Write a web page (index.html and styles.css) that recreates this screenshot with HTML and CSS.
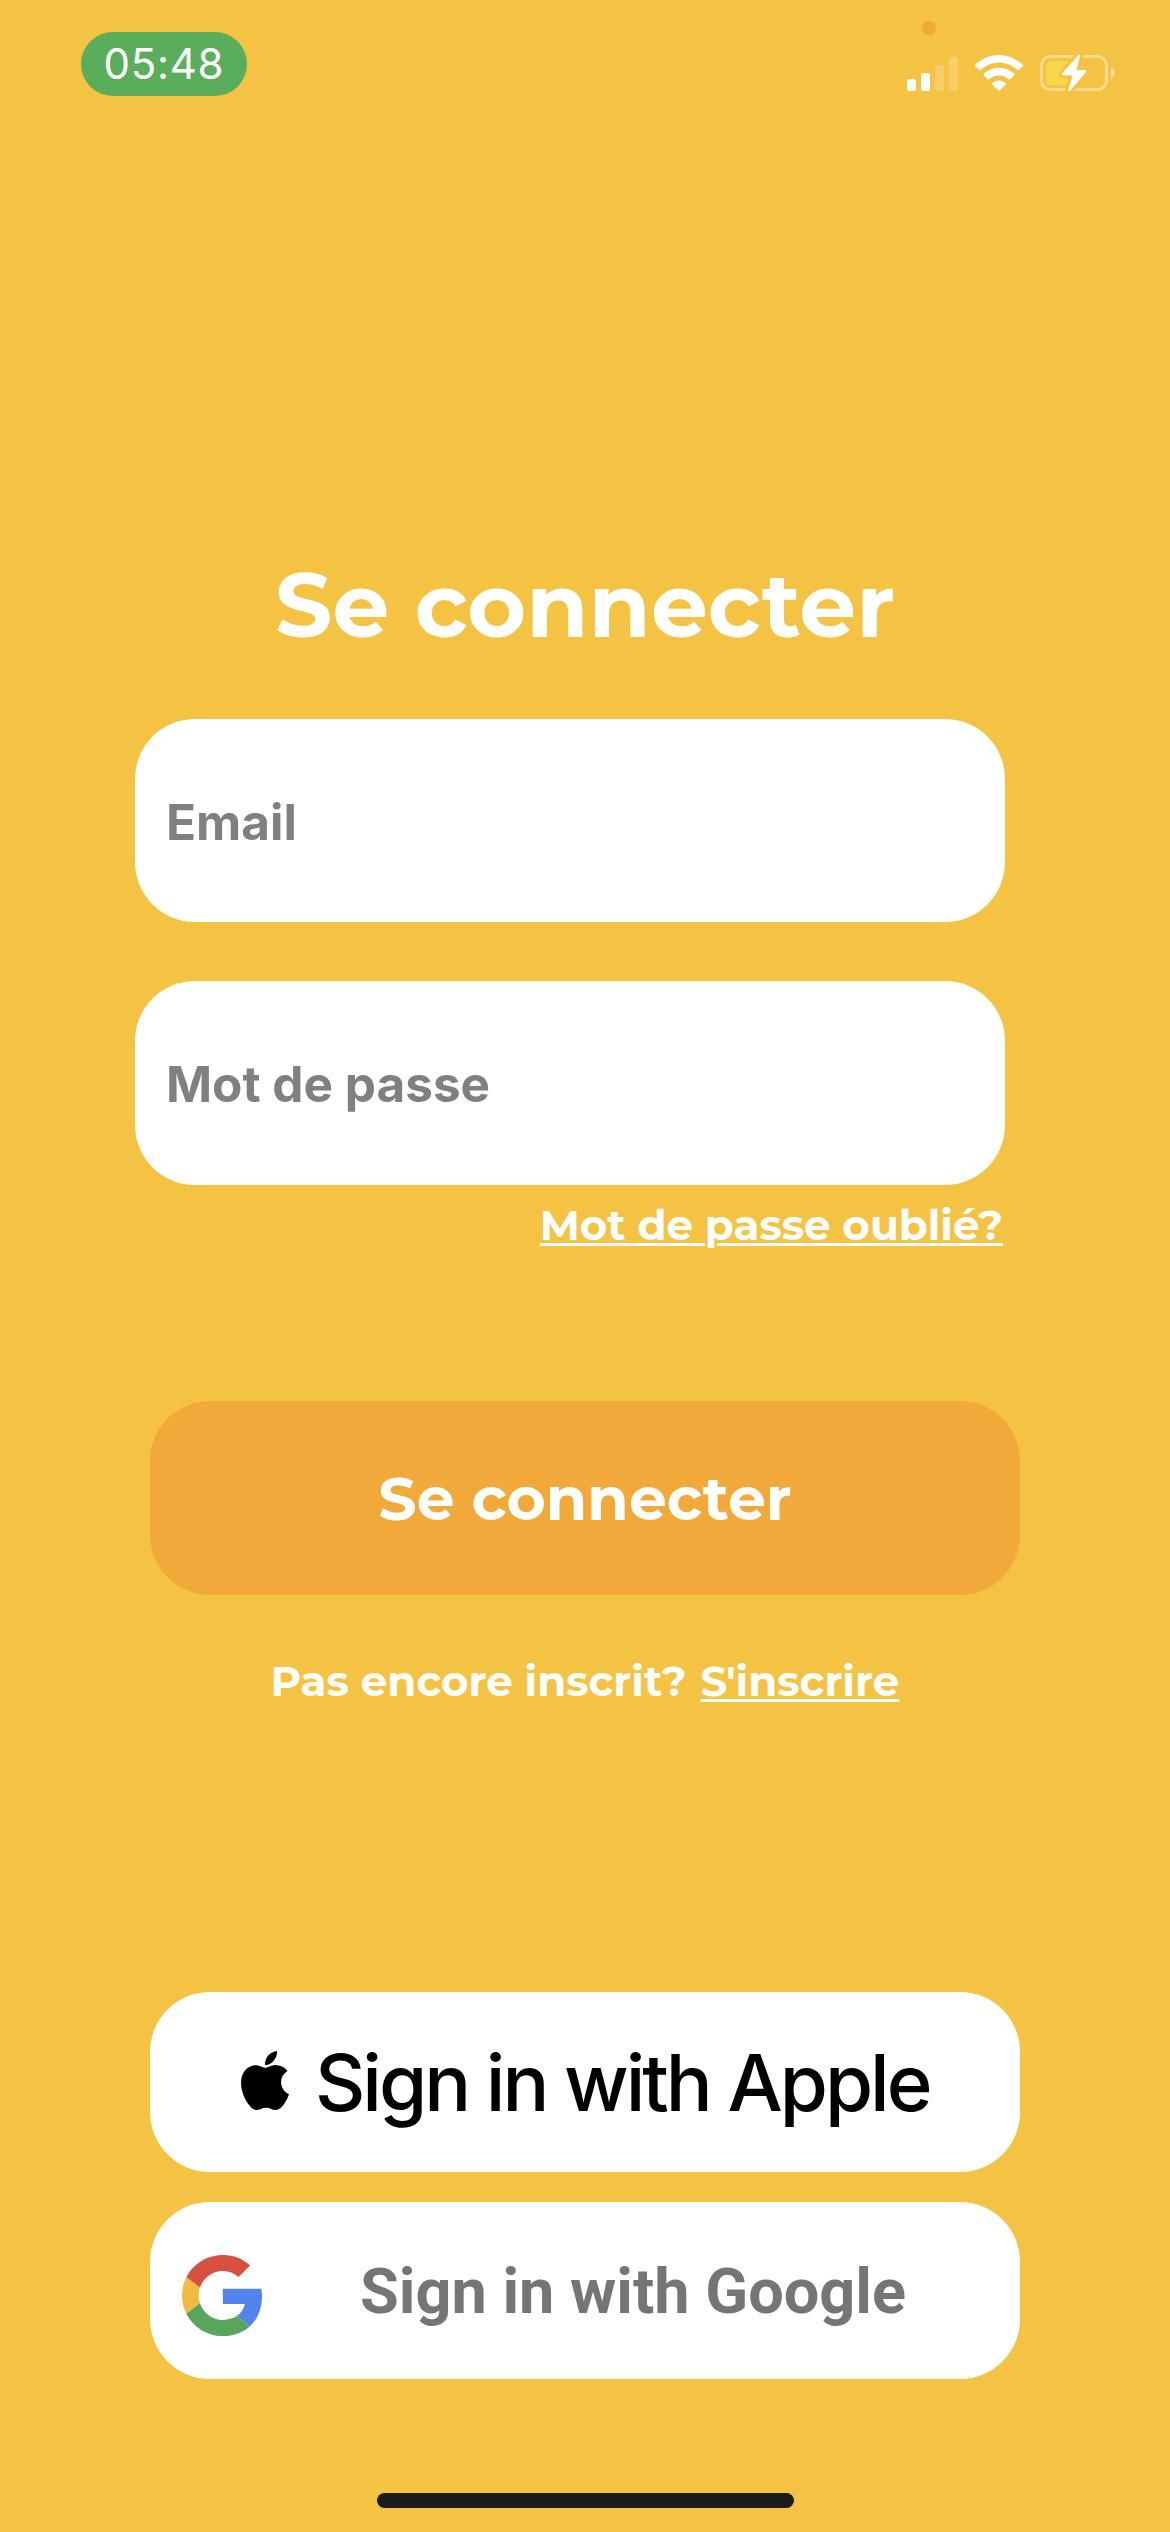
FILE: index.html
```html
<!DOCTYPE html>
<html lang="fr">
<head>
<meta charset="utf-8">
<title>Se connecter</title>
<link rel="stylesheet" href="styles.css">
</head>
<body>
<div class="screen">
  <header class="status">
    <div class="time">05:48</div>
    <div class="indicators">
      <span class="mic-dot"></span>
      <svg class="signal" width="51" height="34" viewBox="0 0 51 34" fill="#fff">
        <rect x="0" y="22" width="9" height="12" rx="2.5"/>
        <rect x="14" y="16" width="9" height="18" rx="2.5"/>
        <rect x="28" y="8" width="9" height="26" rx="2.5" opacity=".2"/>
        <rect x="42" y="0" width="9" height="34" rx="2.5" opacity=".2"/>
      </svg>
      <svg class="wifi" width="48" height="36" viewBox="0 0 48 36" fill="#fff">
        <path d="M24 0C33 0 41 3.500 47.600 9.600Q48.400 10.400 47.600 11.200L44 15Q43.200 15.800 42.400 15C37.200 10.200 31 7.700 24 7.700S10.800 10.200 5.600 15Q4.800 15.800 4 15L.4 11.200Q-.4 10.400 .4 9.600C7 3.500 15 0 24 0Z"/>
        <path d="M24 12.800C29.800 12.800 35 15 39.200 18.700Q40 19.500 39.200 20.300L35.300 24.200Q34.500 25 33.700 24.300C31 21.900 27.700 20.500 24 20.500S17 21.900 14.300 24.300Q13.500 25 12.700 24.200L8.800 20.300Q8 19.500 8.800 18.700C13 15 18.200 12.800 24 12.800Z"/>
        <path d="M24 25.600C26.600 25.600 28.900 26.500 30.800 28Q31.600 28.700 30.800 29.500L24.800 35.500Q24 36.200 23.200 35.500L17.200 29.500Q16.400 28.700 17.200 28C19.100 26.500 21.400 25.600 24 25.600Z"/>
      </svg>
      <svg class="battery" width="76" height="38" viewBox="0 0 76 38">
        <rect x="1.500" y="2.500" width="65" height="33" rx="9" fill="none" stroke="#fff" stroke-opacity=".4" stroke-width="3"/>
        <path d="M71 13.500C76.300 15.500 76.300 22.500 71 24.500Z" fill="#fff" opacity=".45"/>
        <rect x="6" y="7" width="29" height="24" rx="4.500" fill="#f8d649"/>
        <path d="M38.500 .8Q40.800 -.8 40.300 2L36.500 16H45Q47 16.500 45.600 18.500L30.500 36.500Q28 38.500 28.500 35.300L32.500 21.500H23.500Q21 21 22.500 19Z" fill="#f4c344" stroke="#f4c344" stroke-width="6"/>
        <path d="M38 1.500Q40.500 -.5 40 2.500L36.500 16H45Q47 16.300 45.500 18.500L30.500 36.500Q28 38.500 28.500 35.300L32.500 21.500H23Q20.800 21 22.500 19Z" fill="#fff"/>
      </svg>
    </div>
  </header>

  <main class="content">
    <h1 class="title">Se connecter</h1>
    <form class="form">
      <div class="field">Email</div>
      <div class="field">Mot de passe</div>
      <a class="link forgot">Mot de passe oublié?</a>
    </form>
    <div class="button submit">Se connecter</div>
    <p class="signup"><span>Pas encore inscrit?</span><a class="link">S'inscrire</a></p>
    <div class="button apple">
      <svg class="apple-logo" width="48" height="59" viewBox="4 32 376.500 448" preserveAspectRatio="none">
        <path d="M318.700 268.700c-.2-36.700 16.400-64.400 50-84.800-18.800-26.900-47.200-41.700-84.700-44.600-35.500-2.800-74.300 20.700-88.500 20.700-15 0-49.400-19.700-76.400-19.700C63.300 141.200 4 184.800 4 273.500q0 39.300 14.400 81.200c12.800 36.700 59 126.700 107.200 125.200 25.200-.6 43-17.900 75.800-17.900 31.800 0 48.300 17.900 76.400 17.900 48.600-.7 90.400-82.500 102.600-119.300-65.200-30.700-61.700-90-61.700-91.900zM262.100 104.500c27.300-32.400 24.800-61.900 24-72.500-24.100 1.400-52 16.400-67.900 34.900-17.500 19.800-27.800 44.300-25.600 71.900 26.100 2 49.900-11.400 69.500-34.300z"/>
      </svg>
      <span>Sign in with Apple</span>
    </div>
    <div class="button google">
      <svg class="google-logo" width="80" height="81" viewBox="0 0 47 48" preserveAspectRatio="none">
        <path fill="#d85040" d="M24 9.500c3.540 0 6.710 1.220 9.210 3.600l6.850-6.850C35.900 2.380 30.470 0 24 0 14.620 0 6.510 5.380 2.560 13.220l7.980 6.190C12.430 13.720 17.740 9.500 24 9.500z"/>
        <path fill="#5383ec" d="M46.980 24.550c0-1.570-.15-3.090-.38-4.550H24v9.020h12.940c-.58 2.960-2.260 5.480-4.780 7.180l7.730 6c4.510-4.180 7.090-10.360 7.090-17.650z"/>
        <path fill="#f0bb40" d="M10.530 28.590c-.48-1.450-.76-2.990-.76-4.590s.27-3.140.76-4.590l-7.980-6.190C.92 16.460 0 20.120 0 24s.92 7.540 2.560 10.780l7.970-6.190z"/>
        <path fill="#58a55c" d="M24 48c6.480 0 11.930-2.130 15.890-5.810l-7.730-6c-2.150 1.450-4.920 2.300-8.160 2.300-6.260 0-11.570-4.220-13.470-9.910l-7.980 6.190C6.510 42.620 14.620 48 24 48z"/>
      </svg>
      <span>Sign in with Google</span>
    </div>
  </main>
  <div class="home-bar"></div>
</div>
</body>
</html>
```
FILE: styles.css
```css
* { box-sizing: border-box; margin: 0; }

body { background: #f4c344; }

.screen {
  width: 1170px;
  height: 2532px;
  display: flex;
  flex-direction: column;
  overflow: hidden;
  font-family: Montserrat, Inter, sans-serif;
  font-weight: 700;
  color: #fff;
}

.status {
  height: 550px;
  padding: 32px 54px 0 80.5px;
  display: flex;
  justify-content: space-between;
  align-items: flex-start;
}

.time {
  width: 166px;
  height: 64px;
  border-radius: 32px;
  background: #5aae5b;
  font: 400 42px/64px Inter, sans-serif;
  letter-spacing: 0.7px;
  padding-left: 23px;
}

.indicators {
  position: relative;
  display: flex;
  align-items: flex-end;
  padding-top: 22px;
}

.mic-dot {
  position: absolute;
  left: 15px;
  top: -11px;
  width: 14px;
  height: 14px;
  border-radius: 50%;
  background: #f1a93a;
}

.signal { margin: 0 17px 1px 0; }
.wifi { margin: 0 17px 1px 0; }

.content {
  display: flex;
  flex-direction: column;
  padding: 0 150px;
}

.title {
  font-size: 90px;
  line-height: 110px;
  text-align: center;
}

.form {
  width: 870px;
  margin: 59px 0 0 -15px;
  display: flex;
  flex-direction: column;
}

.field {
  height: 203px;
  margin-bottom: 59px;
  padding: 3px 31px 0;
  border-radius: 60px;
  background: #fff;
  color: #808080;
  font: 700 49.5px/200px Inter, sans-serif;
}

.field + .field { height: 204px; margin-bottom: 15px; }

.link {
  font-size: 42px;
  line-height: 51px;
  text-decoration: underline;
  text-decoration-thickness: 3px;
  text-underline-offset: 3px;
}

.forgot { align-self: flex-end; margin-right: 2px; }

.button {
  display: flex;
  align-items: center;
  border-radius: 60px;
  background: #fff;
}

.submit {
  height: 194px;
  margin-top: 150px;
  justify-content: center;
  background: #f1a93a;
  font-size: 60px;
  line-height: 73px;
}

.signup {
  display: flex;
  gap: 14px;
  margin-top: 61px;
  padding-left: 120.5px;
  font-size: 42px;
  line-height: 51px;
  white-space: nowrap;
}

.apple {
  height: 180px;
  margin-top: 285px;
  padding-left: 91px;
  gap: 26px;
  color: #000;
  font: 500 78px/95px Inter, sans-serif;
  letter-spacing: -3.05px;
}

.apple-logo { margin-bottom: 3px; }

.google {
  height: 177px;
  margin-top: 30px;
  padding: 1px 0 0 32px;
  gap: 98px;
  color: #757575;
  font: 700 63px/73px Roboto, sans-serif;
}

.google-logo { margin-top: 9px; }

.home-bar {
  width: 417px;
  height: 15px;
  margin: 114px 0 0 377px;
  border-radius: 8px;
  background: #1c1c1c;
}
```
